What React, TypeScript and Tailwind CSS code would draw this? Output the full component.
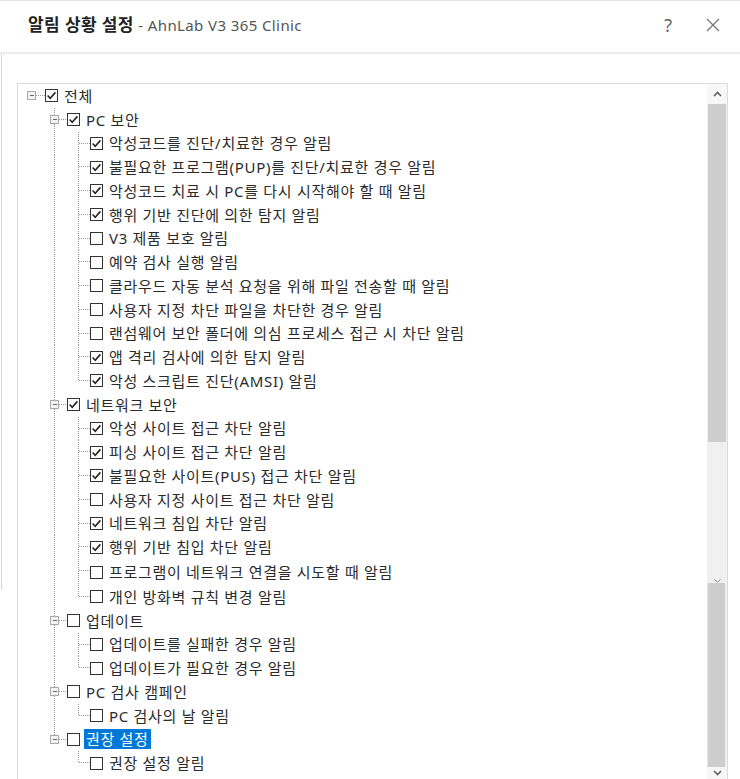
type Item = {
  level: 0 | 1 | 2;
  label: string;
  checked: boolean;
  last?: boolean;
  l1Line?: boolean;
  selected?: boolean;
  tall?: boolean;
};

const rows: Item[] = [
  { level: 0, label: "전체", checked: true },
  { level: 1, label: "PC 보안", checked: true },
  { level: 2, label: "악성코드를 진단/치료한 경우 알림", checked: true, l1Line: true },
  { level: 2, label: "불필요한 프로그램(PUP)를 진단/치료한 경우 알림", checked: true, l1Line: true },
  { level: 2, label: "악성코드 치료 시 PC를 다시 시작해야 할 때 알림", checked: true, l1Line: true },
  { level: 2, label: "행위 기반 진단에 의한 탐지 알림", checked: true, l1Line: true },
  { level: 2, label: "V3 제품 보호 알림", checked: false, l1Line: true },
  { level: 2, label: "예약 검사 실행 알림", checked: false, l1Line: true },
  { level: 2, label: "클라우드 자동 분석 요청을 위해 파일 전송할 때 알림", checked: false, l1Line: true },
  { level: 2, label: "사용자 지정 차단 파일을 차단한 경우 알림", checked: false, l1Line: true },
  { level: 2, label: "랜섬웨어 보안 폴더에 의심 프로세스 접근 시 차단 알림", checked: false, l1Line: true },
  { level: 2, label: "앱 격리 검사에 의한 탐지 알림", checked: true, l1Line: true },
  { level: 2, label: "악성 스크립트 진단(AMSI) 알림", checked: true, l1Line: true, last: true },
  { level: 1, label: "네트워크 보안", checked: true },
  { level: 2, label: "악성 사이트 접근 차단 알림", checked: true, l1Line: true },
  { level: 2, label: "피싱 사이트 접근 차단 알림", checked: true, l1Line: true },
  { level: 2, label: "불필요한 사이트(PUS) 접근 차단 알림", checked: true, l1Line: true },
  { level: 2, label: "사용자 지정 사이트 접근 차단 알림", checked: false, l1Line: true },
  { level: 2, label: "네트워크 침입 차단 알림", checked: true, l1Line: true },
  { level: 2, label: "행위 기반 침입 차단 알림", checked: true, l1Line: true },
  { level: 2, label: "프로그램이 네트워크 연결을 시도할 때 알림", checked: false, l1Line: true, tall: true },
  { level: 2, label: "개인 방화벽 규칙 변경 알림", checked: false, l1Line: true, last: true },
  { level: 1, label: "업데이트", checked: false },
  { level: 2, label: "업데이트를 실패한 경우 알림", checked: false, l1Line: true },
  { level: 2, label: "업데이트가 필요한 경우 알림", checked: false, l1Line: true, last: true },
  { level: 1, label: "PC 검사 캠페인", checked: false },
  { level: 2, label: "PC 검사의 날 알림", checked: false, l1Line: true, last: true },
  { level: 1, label: "권장 설정", checked: false, selected: true, last: true },
  { level: 2, label: "권장 설정 알림", checked: false, l1Line: false, last: true },
];

const dot = { stroke: "#9a9a9a", strokeWidth: 1, strokeDasharray: "1 1", shapeRendering: "crispEdges" as const };

function Expander({ x }: { x: number }) {
  return (
    <g>
      <rect x={x + 0.5} y="7.5" width="8" height="8" fill="#f4f4f4" stroke="#a8a8a8" shapeRendering="crispEdges" />
      <line x1={x + 2.5} x2={x + 6.5} y1="11.5" y2="11.5" stroke="#666" shapeRendering="crispEdges" />
    </g>
  );
}

function Prefix({ r }: { r: Item }) {
  if (r.level === 0) {
    return (
      <svg width="27" height="100%" className="shrink-0">
        <Expander x={9} />
        <line x1="18" x2="27" y1="11.5" y2="11.5" {...dot} />
      </svg>
    );
  }
  if (r.level === 1) {
    return (
      <svg width="49" height="100%" className="shrink-0">
        <line x1="36.5" x2="36.5" y1="0" y2={r.last ? "8" : "100%"} {...dot} />
        <line x1="41" x2="49" y1="11.5" y2="11.5" {...dot} />
        <Expander x={32} />
      </svg>
    );
  }
  return (
    <svg width="72" height="100%" className="shrink-0">
      {r.l1Line && <line x1="36.5" x2="36.5" y1="0" y2="100%" {...dot} />}
      <line x1="60.5" x2="60.5" y1="0" y2={r.last ? "12" : "100%"} {...dot} />
      <line x1="61" x2="72" y1="11.5" y2="11.5" {...dot} />
    </svg>
  );
}

function Check({ on }: { on: boolean }) {
  return (
    <div className="w-[13px] h-[13px] shrink-0 border border-[#333] bg-white flex items-center justify-center">
      {on && (
        <svg width="11" height="11" viewBox="0 0 11 11">
          <path d="M1.6 5.5 L4.2 8.2 L9.4 2.4" fill="none" stroke="#262626" strokeWidth="1.6" />
        </svg>
      )}
    </div>
  );
}

function Row({ r }: { r: Item }) {
  return (
    <div className={`flex items-center ${r.tall ? "h-[26px]" : "h-[23.75px]"}`}>
      <Prefix r={r} />
      <Check on={r.checked} />
      <span
        className={`ml-[4px] px-[2px] leading-[20px] whitespace-nowrap tracking-[0.7px] ${
          r.selected ? "bg-[#0078d7] text-white" : "text-[#2b2b2b]"
        }`}
      >
        {r.label}
      </span>
    </div>
  );
}

export default function App() {
  return (
    <div
      className="w-[740px] h-[779px] bg-white overflow-hidden flex flex-col text-[15px]"
      style={{ fontFamily: '"Noto Sans", "Noto Sans CJK KR", sans-serif' }}
    >
      <div className="h-[54px] shrink-0 flex items-center justify-between border-t border-[#e3e3e3] border-b-2 border-b-[#ececec] pl-[28px] pr-[20px] pb-[3px]">
        <div className="flex items-baseline">
          <span className="font-bold text-[#222] text-[17px] tracking-[0.4px]">알림 상황 설정</span>
          <span className="text-[#555] text-[15px] tracking-[0.4px] whitespace-pre"> - AhnLab V3 365 Clinic</span>
        </div>
        <div className="flex items-center gap-[34px] text-[#666]">
          <span className="text-[18px] leading-none">?</span>
          <svg width="14" height="14" viewBox="0 0 14 14">
            <path d="M1 1 L13 13 M13 1 L1 13" stroke="#777" strokeWidth="1.3" />
          </svg>
        </div>
      </div>
      <div className="flex flex-1 min-h-0">
        <div className="w-[17px] shrink-0">
          <div className="h-[536px] w-[2px] border-r border-[#d6d6d6]" />
        </div>
        <div className="flex flex-col flex-1 min-h-0">
          <div className="h-[29px] shrink-0" />
          <div className="flex flex-1 min-h-0 border-t border-l border-r border-[#dcdcdc] mr-[12px]">
            <div className="flex-1 flex flex-col overflow-hidden">
              {rows.map((r, i) => (
                <Row key={i} r={r} />
              ))}
            </div>
            <div className="w-[20px] shrink-0 flex flex-col bg-[#f0f0f0]">
              <div className="h-[20px] shrink-0 bg-[#f7f7f7] flex items-center justify-center">
                <svg width="9" height="6" viewBox="0 0 9 6">
                  <path d="M1 5 L4.5 1.5 L8 5" fill="none" stroke="#606060" strokeWidth="1.6" />
                </svg>
              </div>
              <div className="h-[338px] shrink-0 mx-[1px] bg-[#cdcdcd]" />
              <div className="h-[136px] shrink-0" />
              <div className="h-[5px] shrink-0 flex items-center justify-center">
                <svg width="9" height="4" viewBox="0 0 9 4">
                  <path d="M1.5 0.5 L4.5 3 L7.5 0.5" fill="none" stroke="#8a8a8a" strokeWidth="1" />
                </svg>
              </div>
              <div className="flex-1 mr-[2px] bg-[#cdcdcd] border-l border-[#e6e6e6]" />
              <div className="h-[12px] shrink-0 bg-[#f7f7f7] flex items-center justify-center">
                <svg width="9" height="6" viewBox="0 0 9 6">
                  <path d="M1 1 L4.5 4.5 L8 1" fill="none" stroke="#606060" strokeWidth="1.6" />
                </svg>
              </div>
            </div>
          </div>
        </div>
      </div>
    </div>
  );
}
